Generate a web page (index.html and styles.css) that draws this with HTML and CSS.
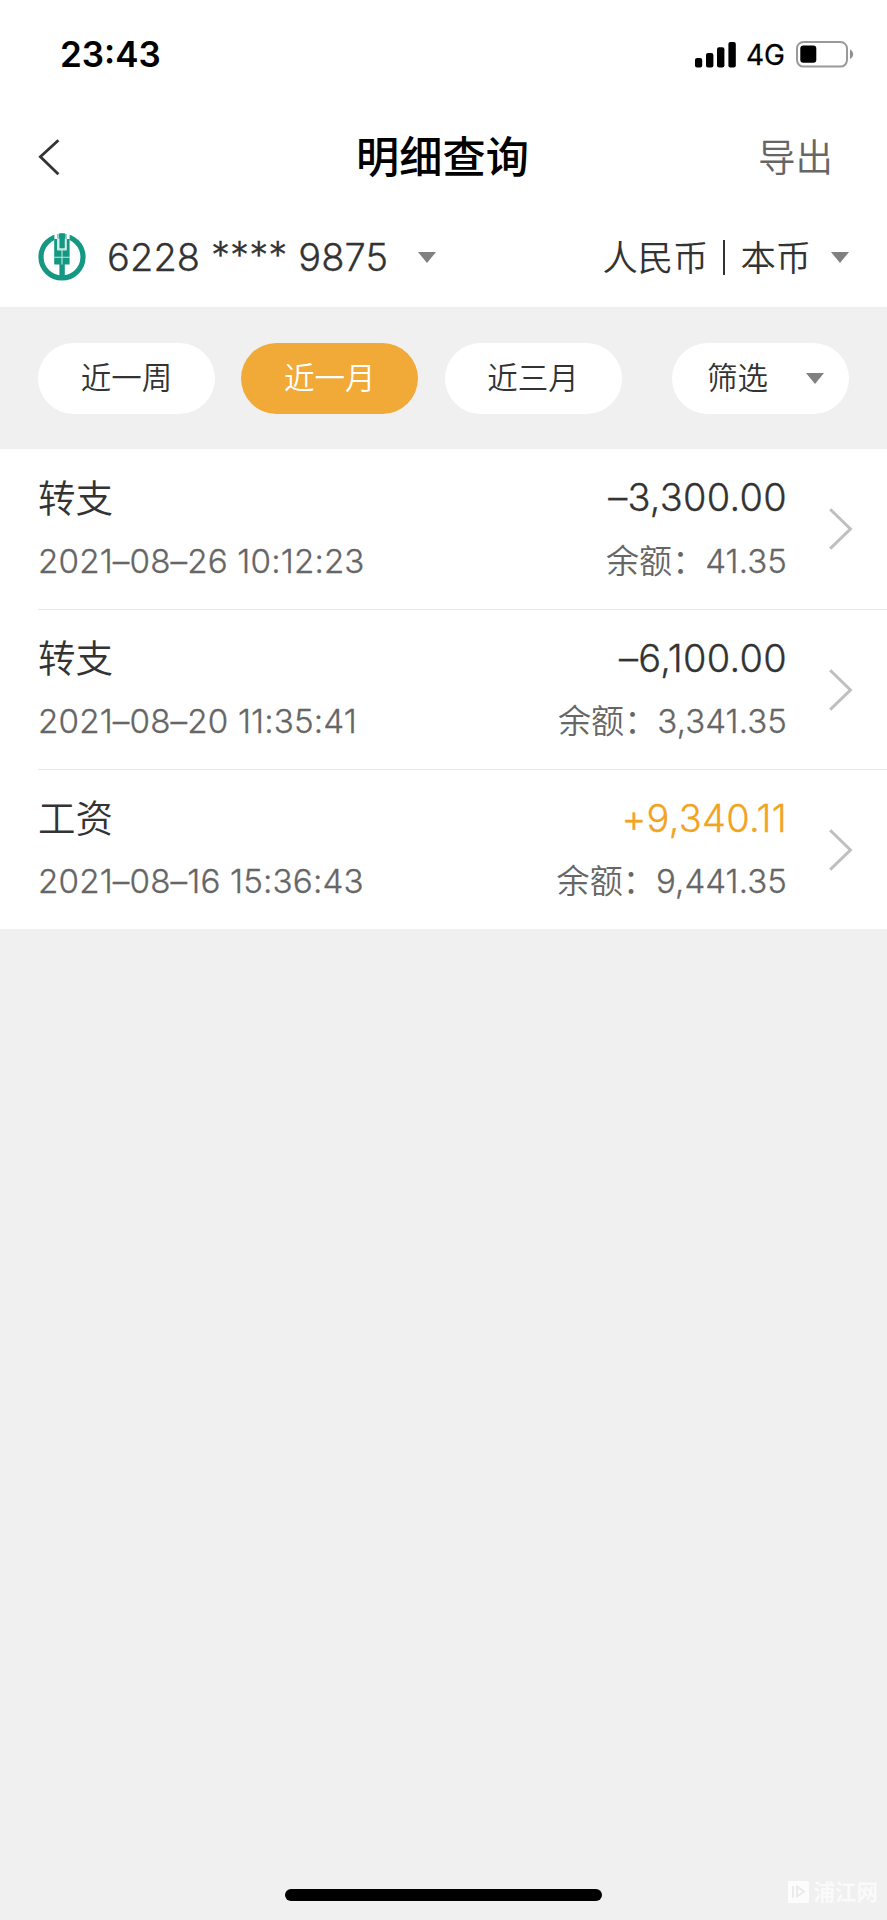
FILE: index.html
```html
<!DOCTYPE html>
<html lang="zh-CN">
<head>
<meta charset="utf-8">
<title>明细查询</title>
<link rel="stylesheet" href="styles.css">
</head>
<body>
<div class="screen">
  <header class="top">
    <div class="status">
      <span class="time">23:43</span>
      <div class="status-right">
        <svg class="signal" width="41" height="26" viewBox="0 0 41 26">
          <rect x="0" y="16" width="7.2" height="9.4" rx="2"/>
          <rect x="11" y="11" width="7.4" height="14.4" rx="2"/>
          <rect x="22" y="5.2" width="7.4" height="20.2" rx="2"/>
          <rect x="33.4" y="0" width="7.4" height="25.4" rx="2"/>
        </svg>
        <span class="network">4G</span>
        <svg class="battery" width="58" height="27" viewBox="0 0 58 27">
          <rect x="1" y="1" width="50" height="24.6" rx="6.5" fill="none" stroke="#999" stroke-width="2"/>
          <rect x="4.3" y="4.6" width="16" height="17.2" rx="3" fill="#000"/>
          <path d="M54 8.6C56 9.6 57.1 11.3 57.1 13.3S56 17 54 18Z" fill="#8f8f8f"/>
        </svg>
      </div>
    </div>
    <nav class="nav">
      <svg class="back" width="24" height="40" viewBox="0 0 24 40"><path d="M20.4 3.2 2.4 19.8 20.4 37.2" fill="none" stroke="#333" stroke-width="2.8"/></svg>
      <h1 class="title">明细查询</h1>
      <span class="export">导出</span>
    </nav>
    <div class="account">
      <svg class="logo" width="48" height="48" viewBox="0 0 48 48">
        <circle cx="24" cy="24" r="21" fill="#fff" stroke="#149883" stroke-width="5.2"/>
        <path fill="#fff" d="M16.4 0H19.4V17H16.4ZM28.6 0H31.6V17H28.6Z"/>
        <path fill="#149883" d="M16.2 6H19.2V17.2H28.6V6H31.6V31.4H26.8V43H21.4V31.4H16.2Z"/>
        <path fill="#149883" d="M21.4.3H26.8V15.4H21.4Z"/>
        <path stroke="#c4e6df" stroke-width="1.1" d="M24 17V31.4M16.2 24.2H31.6M20.2 1V16.6H28V1" fill="none"/>
      </svg>
      <span class="card-no">6228 <span class="stars">****</span> 9875</span>
      <svg class="caret" width="18" height="11" viewBox="0 0 18 11"><path d="M0 0H18L9 11Z"/></svg>
      <div class="currency"><span>人民币</span><i class="bar"></i><span>本币</span></div>
      <svg class="caret" width="18" height="11" viewBox="0 0 18 11"><path d="M0 0H18L9 11Z"/></svg>
    </div>
  </header>
  <div class="filters">
    <div class="pill"><span>近一周</span></div>
    <div class="pill active"><span>近一月</span></div>
    <div class="pill"><span>近三月</span></div>
    <div class="pill filter"><span>筛选</span><svg class="caret" width="18" height="11" viewBox="0 0 18 11"><path d="M0 0H18L9 11Z"/></svg></div>
  </div>
  <main class="list">
    <div class="row">
      <div class="info"><span class="kind">转支</span><span class="date">2021–08–26 10:12:23</span></div>
      <div class="sums"><span class="amount">–3,300.00</span><span class="balance"><b class="label">余额：</b>41.35</span></div>
      <svg class="chevron" width="24" height="42" viewBox="0 0 24 42"><path d="M1.2 1.2 21.4 21 1.2 40.6"/></svg>
    </div>
    <div class="row">
      <div class="info"><span class="kind">转支</span><span class="date">2021–08–20 11:35:41</span></div>
      <div class="sums"><span class="amount">–6,100.00</span><span class="balance"><b class="label">余额：</b>3,341.35</span></div>
      <svg class="chevron" width="24" height="42" viewBox="0 0 24 42"><path d="M1.2 1.2 21.4 21 1.2 40.6"/></svg>
    </div>
    <div class="row">
      <div class="info"><span class="kind">工资</span><span class="date">2021–08–16 15:36:43</span></div>
      <div class="sums"><span class="amount income">+9,340.11</span><span class="balance"><b class="label">余额：</b>9,441.35</span></div>
      <svg class="chevron" width="24" height="42" viewBox="0 0 24 42"><path d="M1.2 1.2 21.4 21 1.2 40.6"/></svg>
    </div>
  </main>
  <footer class="bottom">
    <div class="home"></div>
    <div class="mark">
      <svg width="21" height="22" viewBox="0 0 21 22"><rect width="21" height="22" rx="1" fill="#fcfcfc"/><path d="M5 17V5M9 5.5 16 10.5 9 15.5Z" fill="none" stroke="#e9e9e9" stroke-width="1.8"/></svg>
      <span>浦江网</span>
    </div>
  </footer>
</div>
</body>
</html>
```
FILE: styles.css
```css
* { box-sizing: border-box; }
body { margin: 0; background: #f0f0f0; font-family: Inter, "Noto Sans CJK SC", sans-serif; color: #333; }
.screen { width: 887px; height: 1920px; display: flex; flex-direction: column; background: #f0f0f0; overflow: hidden; }
.top { height: 307px; background: #fff; flex: none; }
span, h1 { white-space: nowrap; }
.status { height: 109px; padding: 0 33px 0 60px; display: flex; align-items: center; justify-content: space-between; color: #000; }
.time { font-size: 35px; font-weight: 600; padding-bottom: 1px; }
.status-right { display: flex; align-items: center; }
.network { font-size: 28px; font-weight: 400; margin: 1px 11px 0 10px; line-height: 28px; -webkit-text-stroke: .3px #000; }
.nav { height: 96px; display: grid; grid-template-columns: 207px 1fr 193px; align-items: center; padding: 0 54px 0 38px; }
.title { margin: 0; font-size: 43.2px; line-height: 60px; font-weight: 500; text-align: center; color: #000; }
.export { text-align: right; font-size: 37.5px; font-weight: 350; color: #666; padding-bottom: 6px; }
.account { height: 104px; display: flex; align-items: center; padding: 0 38px; }
.card-no, .date, .amount, .balance { font-weight: 350; font-feature-settings: "calt" 0; -webkit-text-stroke: .3px currentColor; }
.card-no { margin: 0 30px 1px 21px; font-size: 38px; letter-spacing: .1px; }
.stars { position: relative; top: -2px; }
.caret { fill: #808080; flex: none; }
.currency { margin: 0 20px 0 auto; display: flex; align-items: center; font-size: 35.3px; font-weight: 350; }
.currency span { padding-bottom: 4px; }
.bar { width: 2px; height: 35px; margin: 0 15px; background: #333; }
.filters { height: 142px; flex: none; display: flex; align-items: center; padding: 0 38px; gap: 26.3px; }
.pill { width: 177px; height: 71px; border-radius: 36px; background: #fff; display: flex; align-items: center; justify-content: center; font-size: 30.5px; font-weight: 350; }
.pill span { padding-bottom: 4px; }
.active { background: #f1a937; color: #fff; }
.filter { margin-left: auto; gap: 38px; padding-left: 10px; }
.list { background: #fff; flex: none; padding-left: 38px; height: 480.4px; }
.row { height: 160.2px; display: flex; align-items: center; padding-right: 34px; }
.row + .row { border-top: 1.4px solid #e8e8e8; }
.info, .sums { display: grid; grid-template-rows: 63px 63px; align-items: center; }
.sums { margin-left: auto; text-align: right; justify-items: end; }
.kind { font-size: 37.5px; font-weight: 350; padding-bottom: 5px; }
.date { font-size: 33.2px; color: #666; letter-spacing: .13px; }
.amount { font-size: 38px; letter-spacing: .25px; padding-bottom: 1px; }
.income { color: #f0a41f; }
.balance { font-size: 33px; color: #666; padding-bottom: 4px; letter-spacing: .1px; }
.label { font-weight: 350; -webkit-text-stroke: 0; }
.chevron { margin-left: 42px; fill: none; stroke: #bfbfbf; stroke-width: 3; flex: none; }
.bottom { margin-top: auto; height: 50px; position: relative; display: flex; justify-content: center; align-items: center; }
.home { width: 317px; height: 12px; border-radius: 6px; background: #000; }
.mark { position: absolute; right: 9px; top: 10px; display: flex; align-items: center; gap: 4px; font-size: 21.5px; line-height: 24px; font-weight: 700; color: #fafafa; }
```
